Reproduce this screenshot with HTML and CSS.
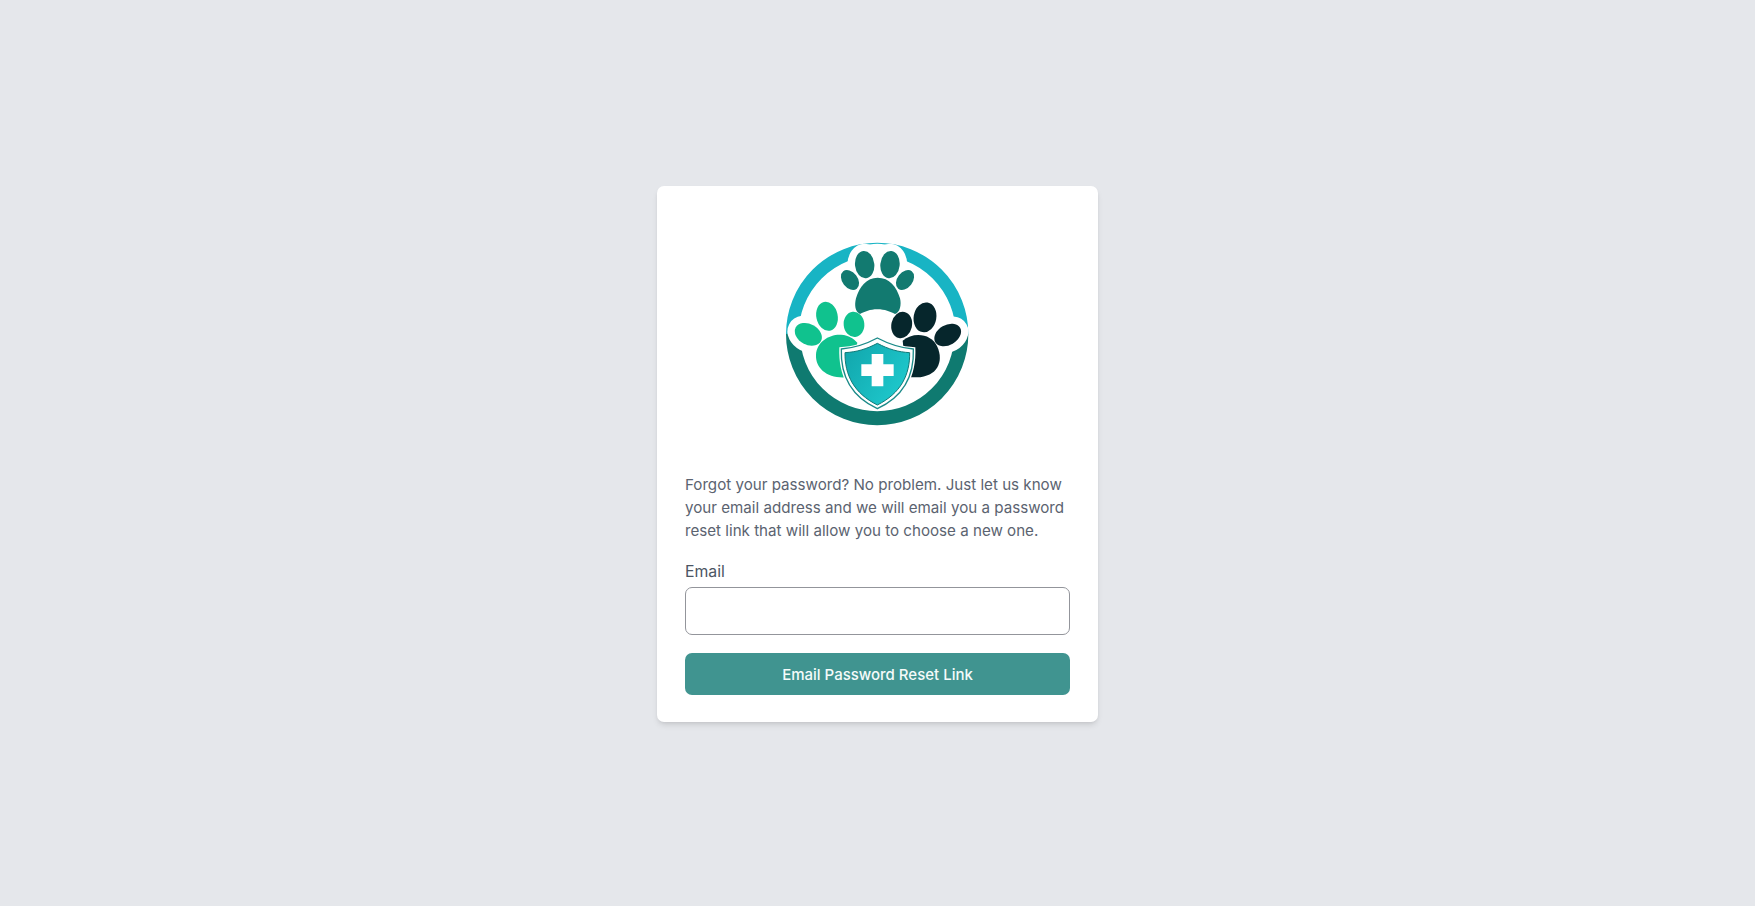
FILE: index.html
```html
<!DOCTYPE html>
<html lang="en">
<head>
    <meta charset="UTF-8">
    <meta name="viewport" content="width=device-width, initial-scale=1.0">
    <title>Forgot Password</title>
    <link rel="stylesheet" href="styles.css">
</head>
<body>
    <div class="page">
        <div class="card">
            <div class="logo">
                <svg width="215" height="205" viewBox="0 0 645 615" xmlns="http://www.w3.org/2000/svg">
                    <defs>
                        <linearGradient id="shieldFill" x1="0" y1="0" x2="1" y2="0.6">
                            <stop offset="0" stop-color="#11a5ab"/>
                            <stop offset="1" stop-color="#1ec8cc"/>
                        </linearGradient>
                    </defs>
                    <!-- ring -->
                    <path d="M67 312 A254.5 254.5 0 0 1 576 312" fill="none" stroke="#18b4c4" stroke-width="38"/>
                    <path d="M69 312 A252.5 252.5 0 0 0 574 312" fill="none" stroke="#0f7a70" stroke-width="42"/>
                    <!-- white halo round the paws -->
                    <g fill="#fff" stroke="#fff" stroke-width="44">
                        <ellipse cx="284" cy="105" rx="30" ry="42"/>
                        <ellipse cx="360" cy="105" rx="30" ry="42"/>
                        <ellipse cx="238" cy="150" rx="24" ry="30"/>
                        <ellipse cx="405" cy="150" rx="24" ry="30"/>
                        <ellipse cx="115" cy="313" rx="43" ry="31" transform="rotate(28 115 313)"/>
                        <ellipse cx="171" cy="259" rx="32" ry="44"/>
                        <ellipse cx="533" cy="315" rx="43" ry="30" transform="rotate(-30 533 315)"/>
                        <ellipse cx="465" cy="262" rx="34" ry="45"/>
                    </g>
                    <ellipse cx="322" cy="75" rx="60" ry="34" fill="#fff"/>
                    <!-- top paw -->
                    <g fill="#127a70">
                        <ellipse cx="284" cy="104" rx="29" ry="41" transform="rotate(-6 284 104)"/>
                        <ellipse cx="360" cy="104" rx="29" ry="41" transform="rotate(6 360 104)"/>
                        <ellipse cx="240" cy="150" rx="23" ry="33" transform="rotate(-38 240 150)"/>
                        <ellipse cx="405" cy="150" rx="23" ry="33" transform="rotate(38 405 150)"/>
                        <path d="M270 252 C255 245 253 225 258 205 C268 170 290 143 323 143 C358 143 380 170 390 205 C395 225 390 248 375 252 C360 245 345 238 322 238 C300 238 285 245 270 252 Z"/>
                    </g>
                    <!-- left paw -->
                    <g fill="#10c28e">
                        <ellipse cx="171" cy="259" rx="32" ry="44" transform="rotate(-12 171 259)"/>
                        <ellipse cx="252" cy="283" rx="31" ry="38" transform="rotate(-6 252 283)"/>
                        <ellipse cx="115" cy="313" rx="43" ry="31" transform="rotate(28 115 313)"/>
                        <path d="M228 442 C172 446 136 415 138 375 C140 335 178 312 213 314 C238 316 250 325 262 338 L240 442 Z"/>
                    </g>
                    <!-- right paw -->
                    <g fill="#06262c">
                        <ellipse cx="395" cy="285" rx="31" ry="40" transform="rotate(12 395 285)"/>
                        <ellipse cx="465" cy="262" rx="34" ry="45" transform="rotate(10 465 262)"/>
                        <ellipse cx="533" cy="315" rx="43" ry="30" transform="rotate(-30 533 315)"/>
                        <path d="M398 332 C430 305 484 310 502 350 C522 395 502 440 440 442 L410 442 Z"/>
                    </g>
                    <!-- shield -->
                    <path d="M322 319 C360 340 395 350 436 352 C440 440 405 505 322 542 C240 505 204 440 208 352 C250 350 285 340 322 319 Z" fill="#fff"/>
                    <path d="M322 324 C360 344 392 354 430 357 C433 440 400 500 322 536 C245 500 211 440 214 357 C252 354 285 344 322 324 Z" fill="#fff" stroke="#1a8a88" stroke-width="4"/>
                    <path d="M322 340 C356 358 385 366 419 368 C420 435 392 490 322 525 C252 490 224 435 225 368 C259 366 288 358 322 340 Z" fill="url(#shieldFill)" stroke="#127a78" stroke-width="3"/>
                    <path d="M305 372 H340 V403 H371 V438 H340 V469 H305 V438 H274 V403 H305 Z" fill="#fff"/>
                </svg>
            </div>

            <p class="intro">Forgot your password? No problem. Just let us know your email address and we will email you a password reset link that will allow you to choose a new one.</p>

            <form>
                <label class="field-label" for="email">Email</label>
                <input class="field-input" id="email" type="email" name="email">
                <button class="submit-btn" type="button">Email Password Reset Link</button>
            </form>
        </div>
    </div>
</body>
</html>
```

FILE: styles.css
```css
* {
    box-sizing: border-box;
}
body {
    margin: 0;
    font-family: Inter, "Open Sans", sans-serif;
    background-color: #e5e7eb;
}
.page {
    min-height: 906px;
    padding-top: 2px;
    display: flex;
    align-items: center;
    justify-content: center;
}
.card {
    width: 441px;
    padding: 44px 28px 27.5px;
    background-color: #fff;
    border-radius: 7px;
    box-shadow: 0 4px 6px -1px rgba(0, 0, 0, 0.1), 0 2px 4px -2px rgba(0, 0, 0, 0.1);
}
.logo {
    display: flex;
    justify-content: center;
}
.logo svg {
    display: block;
}
.intro {
    margin: 38px 0 0;
    font-size: 15.15px;
    line-height: 23px;
    color: #5b6370;
}
.field-label {
    display: block;
    margin-top: 19px;
    font-size: 15.8px;
    line-height: 22px;
    color: #4b5563;
}
.field-input {
    display: block;
    width: 100%;
    height: 48px;
    margin-top: 4px;
    padding: 0 12px;
    border: 1px solid #93959b;
    border-radius: 7px;
    background-color: #fff;
}
.submit-btn {
    display: block;
    width: 100%;
    height: 42px;
    margin-top: 18px;
    padding: 1px 0 0;
    border: 0;
    border-radius: 7px;
    background-color: #409490;
    color: #f4fbfa;
    font-family: inherit;
    font-size: 15px;
    font-weight: 500;
}
```
